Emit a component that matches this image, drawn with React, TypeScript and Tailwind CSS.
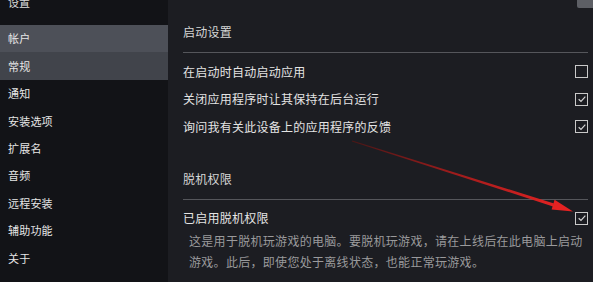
import React from "react";

const NAV = ["帐户", "常规", "通知", "安装选项", "扩展名", "音频", "远程安装", "辅助功能", "关于"];

const font = "font-['Noto_Sans_CJK_SC','Noto_Sans',sans-serif]";

function Checkbox({ checked }: { checked: boolean }) {
  return (
    <div className="flex h-[13px] w-[13px] items-center justify-center border-[1.5px] border-[#c9c9c9]">
      {checked && (
        <svg viewBox="0 0 12 12" className="h-[10px] w-[10px]" fill="none" stroke="#d6d6d6" strokeWidth="1.4">
          <polyline points="2,6.3 4.8,9 10,3.2" />
        </svg>
      )}
    </div>
  );
}

function Row({ label, checked }: { label: string; checked: boolean }) {
  return (
    <div className="flex h-[27.5px] items-center justify-between pr-[5px]">
      <span className="text-[12px] leading-[16px] tracking-[0.25px] text-[#e4e4e4]">{label}</span>
      <Checkbox checked={checked} />
    </div>
  );
}

export default function App() {
  return (
    <div className={`relative flex h-[282px] w-[593px] overflow-hidden bg-[#1c1d22] ${font}`}>
      {/* sidebar */}
      <div className="w-[168px] shrink-0 bg-[#121317]">
        <div className="h-[25px] overflow-hidden">
          <div className="-mt-[6px] pl-[8px] text-[11px] leading-[16px] text-[#dcdcdc]">设置</div>
        </div>
        {NAV.map((n, i) => (
          <div
            key={n}
            className={
              "flex h-[27.4px] items-center pl-[8px] text-[11px] tracking-[0.2px] text-[#e6e6e6] " +
              (i === 0 ? "bg-[#4d5058]" : i === 1 ? "bg-[#41444b]" : "")
            }
          >
            {n}
          </div>
        ))}
      </div>

      {/* main */}
      <div className="flex-1 pl-[15px]">
        <div className="pt-[24px] text-[12px] leading-[16px] tracking-[0.25px] text-[#d6d6d6]">启动设置</div>
        <div className="mr-[5px] mt-[12px] h-px bg-[#55565b]" />
        <div className="pt-[5px]">
          <Row label="在启动时自动启动应用" checked={false} />
          <Row label="关闭应用程序时让其保持在后台运行" checked={true} />
          <Row label="询问我有关此设备上的应用程序的反馈" checked={true} />
        </div>

        <div className="mt-[30.5px] text-[12px] leading-[16px] tracking-[0.25px] text-[#d6d6d6]">脱机权限</div>
        <div className="mr-[5px] mt-[12px] h-px bg-[#55565b]" />
        <div className="flex h-[24px] mt-[6px] items-center justify-between pr-[5px]">
          <span className="text-[12px] leading-[16px] tracking-[0.25px] text-[#e4e4e4]">已启用脱机权限</span>
          <Checkbox checked={true} />
        </div>
        <div className="pl-[6px] text-[12px] leading-[21px] tracking-[0.3px] text-[#9a9a9c]">
          <div className="whitespace-nowrap">这是用于脱机玩游戏的电脑。要脱机玩游戏，请在上线后在此电脑上启动</div>
          <div className="whitespace-nowrap">游戏。此后，即使您处于离线状态，也能正常玩游戏。</div>
        </div>
      </div>

      {/* window control peeking at the top right */}
      <div className="absolute right-0 top-0 h-[8px] w-[16px] rounded-bl-[2px] bg-[#5d5f65]" />

      {/* red annotation arrow */}
      <svg className="pointer-events-none absolute left-0 top-0" width="593" height="282" viewBox="0 0 593 282">
        <defs>
          <linearGradient id="shaft" x1="352" y1="141" x2="560" y2="207" gradientUnits="userSpaceOnUse">
            <stop offset="0" stopColor="#4a1616" />
            <stop offset="0.5" stopColor="#a01c1c" />
            <stop offset="1" stopColor="#e42222" />
          </linearGradient>
        </defs>
        <polygon points="352.1,140.6 351.9,141.4 553,206.4 554,203.4" fill="url(#shaft)" />
        <polygon points="573,211.5 554.6,199.8 551.6,209.6" fill="#e42222" />
      </svg>
    </div>
  );
}
